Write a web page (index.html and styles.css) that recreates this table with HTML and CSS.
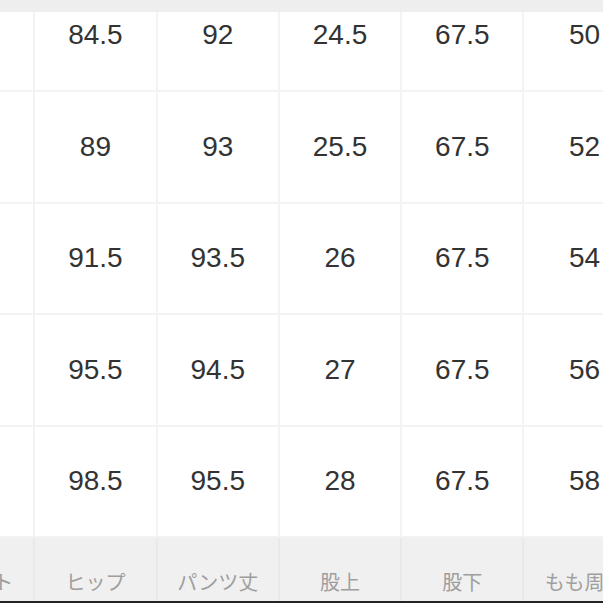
FILE: index.html
```html
<!DOCTYPE html>
<html lang="ja">
<head>
<meta charset="utf-8">
<link rel="stylesheet" href="styles.css">
</head>
<body>
<div class="viewport">
  <div class="topbar"></div>
  <div class="sheet">
    <div class="grid body-grid">
      <div class="cell first"></div>
      <div class="cell first"><span>84.5</span></div>
      <div class="cell first"><span>92</span></div>
      <div class="cell first"><span>24.5</span></div>
      <div class="cell first"><span>67.5</span></div>
      <div class="cell first"><span>50</span></div>

      <div class="cell"></div>
      <div class="cell"><span>89</span></div>
      <div class="cell"><span>93</span></div>
      <div class="cell"><span>25.5</span></div>
      <div class="cell"><span>67.5</span></div>
      <div class="cell"><span>52</span></div>

      <div class="cell"></div>
      <div class="cell"><span>91.5</span></div>
      <div class="cell"><span>93.5</span></div>
      <div class="cell"><span>26</span></div>
      <div class="cell"><span>67.5</span></div>
      <div class="cell"><span>54</span></div>

      <div class="cell"></div>
      <div class="cell"><span>95.5</span></div>
      <div class="cell"><span>94.5</span></div>
      <div class="cell"><span>27</span></div>
      <div class="cell"><span>67.5</span></div>
      <div class="cell"><span>56</span></div>

      <div class="cell"></div>
      <div class="cell"><span>98.5</span></div>
      <div class="cell"><span>95.5</span></div>
      <div class="cell"><span>28</span></div>
      <div class="cell"><span>67.5</span></div>
      <div class="cell"><span>58</span></div>
    </div>
    <div class="grid head-grid">
      <div class="hcell">ウエスト</div>
      <div class="hcell">ヒップ</div>
      <div class="hcell">パンツ丈</div>
      <div class="hcell">股上</div>
      <div class="hcell">股下</div>
      <div class="hcell">もも周り</div>
    </div>
  </div>
  <div class="bottomline"></div>
</div>
</body>
</html>
```

FILE: styles.css
```css
html, body {
  margin: 0;
  padding: 0;
  background: #ffffff;
}

.viewport {
  width: 603px;
  height: 603px;
  overflow: hidden;
  display: flex;
  flex-direction: column;
  background: #ffffff;
}

.topbar {
  height: 12px;
  flex: none;
  background: #eeeeee;
}

.sheet {
  margin-left: -87px;
  width: 732px;
  display: flex;
  flex-direction: column;
}

.grid {
  display: grid;
  grid-template-columns: repeat(6, 120.3px);
  column-gap: 2px;
}

.body-grid {
  background: #f3f3f3;
  row-gap: 2px;
  grid-template-rows: 78px repeat(4, 109.5px);
  padding-bottom: 2px;
}

.cell {
  background: #ffffff;
  display: flex;
  align-items: center;
  justify-content: center;
  font-family: "Liberation Sans", Arial, sans-serif;
  font-size: 28px;
  line-height: 32px;
  color: #333333;
}

.cell.first {
  align-items: flex-start;
  padding-top: 7px;
}

.head-grid {
  background: #e9e9e9;
  height: 63px;
}

.hcell {
  background: #f0f0f0;
  display: flex;
  align-items: flex-end;
  justify-content: center;
  padding-bottom: 7px;
  font-family: "Noto Sans CJK JP", "Noto Sans", sans-serif;
  font-size: 20px;
  line-height: 24px;
  color: #9e9e9e;
}

.bottomline {
  height: 2px;
  flex: none;
  background: #222222;
}
```
